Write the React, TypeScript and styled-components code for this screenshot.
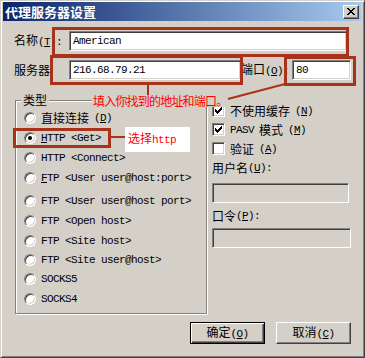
import React from 'react';
import styled, { createGlobalStyle } from 'styled-components';

const GlobalStyle = createGlobalStyle`
  html, body { margin: 0; padding: 0; background: #d4d0c8; }
  body {
    width: 365px; height: 358px; overflow: hidden;
    font-family: "Noto Sans CJK SC", "Liberation Sans", sans-serif;
    font-size: 12px; color: #000;
  }
  * { box-sizing: border-box; }
`;

const CJK = `"Noto Sans CJK SC", "Liberation Sans", sans-serif`;
const MONO = `"Liberation Mono", "Noto Sans CJK SC", monospace`;

const Page = styled.div`
  position: relative;
  width: 365px;
  height: 358px;
`;

const Window = styled.div`
  width: 365px;
  height: 358px;
  background: #d4d0c8;
  border: 1px solid;
  border-color: #d4d0c8 #404040 #404040 #d4d0c8;
  box-shadow: inset 1px 1px 0 #fff, inset -1px -1px 0 #808080;
  padding: 1px 3px 3px 2px;
  display: flex;
  flex-direction: column;
`;

const TitleBar = styled.div`
  height: 19px;
  display: flex;
  align-items: center;
  justify-content: space-between;
  padding: 0 2px;
  background: linear-gradient(to right, #0a246a, #a6caf0);
`;

const TitleText = styled.span`
  color: #fff;
  font-family: ${CJK};
  font-weight: bold;
  font-size: 13px;
  line-height: 19px;
`;

const CloseButton = styled.div`
  width: 16px;
  height: 14px;
  background: #d4d0c8;
  border: 1px solid;
  border-color: #fff #404040 #404040 #fff;
  box-shadow: inset -1px -1px 0 #808080;
  display: flex;
  align-items: center;
  justify-content: center;
`;

const Body = styled.div`
  display: flex;
  flex-direction: column;
  padding: 10px 10px 0 11px;
`;

const FieldRow = styled.div<{ $mt?: number }>`
  display: flex;
  align-items: center;
  height: 20px;
  margin-top: ${(p) => p.$mt ?? 0}px;
`;

const FieldLabel = styled.label<{ $w: number }>`
  width: ${(p) => p.$w}px;
  flex-shrink: 0;
  font-size: 12px;
  line-height: 14px;
  white-space: nowrap;
`;

const TextBox = styled.input<{ $w: number }>`
  width: ${(p) => p.$w}px;
  height: 20px;
  margin: 0;
  border: 1px solid;
  border-color: #808080 #fff #fff #808080;
  box-shadow: inset 1px 1px 0 #404040, inset -1px -1px 0 #d4d0c8;
  background: #fff;
  padding: 0 2px 0 3px;
  font-family: ${MONO};
  font-size: 11px;
  letter-spacing: -0.6px;
  color: #000;
  outline: none;
  &:disabled { background: #d4d0c8; }
`;

const Main = styled.div`
  display: flex;
  align-items: flex-start;
  gap: 5px;
  margin-top: 13px;
  padding-left: 1px;
`;

const GroupBox = styled.fieldset`
  width: 193px;
  height: 221px;
  margin: 0;
  padding: 1px 0 0 0;
  min-width: 0;
  border: 1px solid #808080;
  box-shadow: inset 1px 1px 0 #fff, 1px 1px 0 #fff;
`;

const Legend = styled.legend`
  margin-left: 5px;
  padding: 0 2px;
  font-size: 12px;
  line-height: 14px;
  background: #d4d0c8;
`;

const RadioRow = styled.label<{ $mt: number }>`
  display: flex;
  align-items: center;
  gap: 5px;
  height: 20px;
  margin-top: ${(p) => p.$mt}px;
  padding-left: 8px;
  font-size: 12px;
  line-height: 14px;
  white-space: nowrap;
`;

const RadioDot = styled.span<{ $on: boolean }>`
  width: 12px;
  height: 12px;
  flex-shrink: 0;
  border-radius: 50%;
  border: 1px solid;
  border-color: #808080 #fff #fff #808080;
  box-shadow: inset 1px 1px 0 #404040, inset -1px -1px 0 #d4d0c8;
  background: #fff;
  display: flex;
  align-items: center;
  justify-content: center;
  &::after {
    content: '';
    display: ${(p) => (p.$on ? 'block' : 'none')};
    width: 4px;
    height: 4px;
    border-radius: 50%;
    background: #000;
  }
`;

const Side = styled.div`
  display: flex;
  flex-direction: column;
  width: 139px;
  padding-top: 8px;
`;

const CheckRow = styled.label`
  display: flex;
  align-items: center;
  gap: 5px;
  height: 19px;
  font-size: 12px;
  line-height: 14px;
  white-space: nowrap;
`;

const CheckBox = styled.span`
  width: 13px;
  height: 13px;
  flex-shrink: 0;
  border: 1px solid;
  border-color: #808080 #fff #fff #808080;
  box-shadow: inset 1px 1px 0 #404040, inset -1px -1px 0 #d4d0c8;
  background: #fff;
  display: flex;
  align-items: center;
  justify-content: center;
`;

const SideLabel = styled.div<{ $mt: number; $h: number }>`
  height: ${(p) => p.$h}px;
  margin-top: ${(p) => p.$mt}px;
  display: flex;
  align-items: center;
  font-size: 12px;
  line-height: 14px;
  white-space: nowrap;
`;

const SideBox = styled(TextBox)<{ $mt: number }>`
  margin-top: ${(p) => p.$mt}px;
`;

const ButtonRow = styled.div`
  display: flex;
  justify-content: flex-end;
  gap: 11px;
  margin-top: 8px;
`;

const Button = styled.button<{ $default?: boolean }>`
  width: 75px;
  height: 22px;
  margin: 0;
  padding: 0;
  background: #d4d0c8;
  font-family: ${CJK};
  font-size: 12px;
  line-height: 14px;
  color: #000;
  border: 1px solid;
  border-color: ${(p) => (p.$default ? '#000' : '#fff #404040 #404040 #fff')};
  box-shadow: ${(p) =>
    p.$default
      ? 'inset 1px 1px 0 #fff, inset -1px -1px 0 #404040, inset -2px -2px 0 #808080'
      : 'inset -1px -1px 0 #808080'};
`;

const Latin = styled.span`
  font-family: ${MONO};
  font-size: 11px;
  letter-spacing: -0.6px;
  white-space: pre;
`;

const Han = styled.span`
  font-family: ${CJK};
`;

const Mnemonic = styled.span`
  text-decoration: underline;
  text-underline-offset: 1px;
`;

const Overlay = styled.svg`
  position: absolute;
  left: 0;
  top: 0;
  width: 365px;
  height: 358px;
  pointer-events: none;
`;

const Note = styled.div<{ $x: number; $y: number; $bg: string; $pad: string; $ls: number }>`
  position: absolute;
  left: ${(p) => p.$x}px;
  top: ${(p) => p.$y}px;
  background: ${(p) => p.$bg};
  padding: ${(p) => p.$pad};
  color: #f00;
  font-size: 12px;
  line-height: 12px;
  white-space: nowrap;
  pointer-events: none;
  ${Han} { letter-spacing: ${(p) => p.$ls}px; }
`;

/* text with '&' mnemonic markers, split into latin / CJK runs */
function Mixed({ text }: { text: string }) {
  const tokens: { c: string; u: boolean; a: boolean }[] = [];
  for (let i = 0; i < text.length; i++) {
    let u = false;
    if (text[i] === '&' && i + 1 < text.length) {
      u = true;
      i++;
    }
    const c = text[i];
    tokens.push({ c, u, a: c.charCodeAt(0) < 0x2000 });
  }
  const groups: { a: boolean; items: { c: string; u: boolean }[] }[] = [];
  for (const t of tokens) {
    const last = groups[groups.length - 1];
    if (last && last.a === t.a) last.items.push(t);
    else groups.push({ a: t.a, items: [t] });
  }
  return (
    <>
      {groups.map((g, i) => {
        const parts: React.ReactNode[] = [];
        let buf = '';
        g.items.forEach((t, j) => {
          if (t.u) {
            if (buf) parts.push(buf);
            buf = '';
            parts.push(<Mnemonic key={j}>{t.c}</Mnemonic>);
          } else buf += t.c;
        });
        if (buf) parts.push(buf);
        const Comp = g.a ? Latin : Han;
        return <Comp key={i}>{parts}</Comp>;
      })}
    </>
  );
}

const CheckMark = () => {
  const cols = [2, 3, 4, 3, 2, 1, 0];
  return (
    <svg width="7" height="7" viewBox="0 0 7 7" shapeRendering="crispEdges">
      {cols.map((top, x) => (
        <rect key={x} x={x} y={top} width="1" height="3" fill="#000" />
      ))}
    </svg>
  );
};

const CloseIcon = () => (
  <svg width="8" height="7" viewBox="0 0 8 7" shapeRendering="crispEdges">
    {[0, 1, 2, 3, 4, 5, 6].map((i) => (
      <React.Fragment key={i}>
        <rect x={i} y={i} width="2" height="1" fill="#000" />
        <rect x={6 - i} y={i} width="2" height="1" fill="#000" />
      </React.Fragment>
    ))}
  </svg>
);

const radios = [
  { label: '直接连接(&D)', mt: 0 },
  { label: '&HTTP <Get>', mt: 0, on: true },
  { label: 'HTTP <Connect>', mt: 0 },
  { label: '&FTP <User user@host:port>', mt: 0 },
  { label: 'FTP <User user@host port>', mt: 3 },
  { label: 'FTP <Open host>', mt: 0 },
  { label: 'FTP <Site host>', mt: 0 },
  { label: 'FTP <Site user@host>', mt: -1 },
  { label: 'SOCKS5', mt: -1 },
  { label: 'SOCKS4', mt: 0 },
];

const checks = [
  { label: '不使用缓存(&N)', on: true },
  { label: 'PASV模式(&M)', on: true },
  { label: '验证(&A)', on: false },
];

const RED = '#a8321a';

export default function App() {
  return (
    <Page>
      <GlobalStyle />
      <Window>
        <TitleBar>
          <TitleText>代理服务器设置</TitleText>
          <CloseButton>
            <CloseIcon />
          </CloseButton>
        </TitleBar>
        <Body>
          <FieldRow>
            <FieldLabel $w={55}>
              <Mixed text="名称(&T):" />
            </FieldLabel>
            <TextBox $w={278} readOnly defaultValue="American" />
          </FieldRow>
          <FieldRow $mt={9}>
            <FieldLabel $w={55}>
              <Mixed text="服务器" />
            </FieldLabel>
            <TextBox $w={173} readOnly defaultValue="216.68.79.21" />
            <FieldLabel $w={51}>
              <Mixed text="端口(&O):" />
            </FieldLabel>
            <TextBox $w={59} readOnly defaultValue="80" />
          </FieldRow>
          <Main>
            <GroupBox>
              <Legend>类型</Legend>
              {radios.map((r) => (
                <RadioRow key={r.label} $mt={r.mt}>
                  <RadioDot $on={!!r.on} />
                  <Mixed text={r.label} />
                </RadioRow>
              ))}
            </GroupBox>
            <Side>
              {checks.map((c) => (
                <CheckRow key={c.label}>
                  <CheckBox>{c.on && <CheckMark />}</CheckBox>
                  <Mixed text={c.label} />
                </CheckRow>
              ))}
              <SideLabel $mt={0} $h={19}>
                <Mixed text="用户名(&U):" />
              </SideLabel>
              <SideBox $w={137} $mt={6} disabled />
              <SideLabel $mt={4} $h={18}>
                <Mixed text="口令(&P):" />
              </SideLabel>
              <SideBox $w={139} $mt={3} disabled />
            </Side>
          </Main>
          <ButtonRow>
            <Button $default>
              <Mixed text="确定(&O)" />
            </Button>
            <Button>
              <Mixed text="取消(&C)" />
            </Button>
          </ButtonRow>
        </Body>
      </Window>

      <Overlay viewBox="0 0 365 358">
        <g fill="none" stroke={RED} strokeWidth="3">
          <rect x="53.5" y="28.5" width="294" height="27" />
          <rect x="51.5" y="56.5" width="190" height="27" />
          <rect x="285.5" y="57.5" width="69" height="27" />
          <rect x="14.5" y="129.5" width="95" height="17" />
        </g>
        <g stroke={RED} strokeWidth="2">
          <line x1="148" y1="85" x2="148" y2="97" />
          <line x1="285" y1="84" x2="224" y2="100" />
          <line x1="111" y1="137" x2="127" y2="137" />
        </g>
      </Overlay>
      <Note $x={92} $y={95} $bg="#d4d0c8" $pad="0 1px" $ls={-0.8}>
        <Mixed text="填入你找到的地址和端口。" />
      </Note>
      <Note $x={125} $y={127} $bg="#fff" $pad="5px 14px 6px 3px" $ls={0}>
        <Mixed text="选择http" />
      </Note>
    </Page>
  );
}
